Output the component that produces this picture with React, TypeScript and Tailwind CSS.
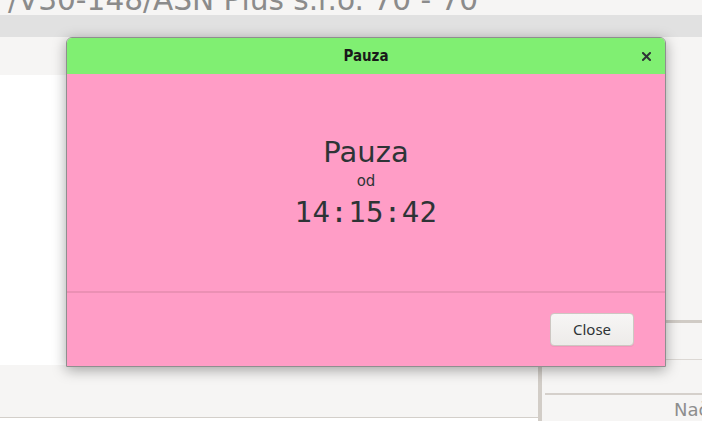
import React from "react";

export default function App() {
  const sans = { fontFamily: '"DejaVu Sans", "Liberation Sans", sans-serif' };
  return (
    <div
      className="relative w-[702px] h-[421px] overflow-hidden bg-[#f6f5f4] flex flex-col"
      style={sans}
    >
      {/* top title strip */}
      <div className="h-[15px] overflow-hidden pl-[8px] shrink-0">
        <div className="text-[29.6px] leading-[34px] -mt-[17px] text-[#8b8b8b] whitespace-nowrap">
          /V30-148/ASN Plus s.r.o. 70 - 70
        </div>
      </div>
      <div className="h-[22px] bg-[#e1e1e1] shrink-0" />

      {/* content */}
      <div className="flex flex-1 min-h-0">
        <div className="w-[538px] flex flex-col shrink-0">
          <div className="h-[38px] shrink-0" />
          <div className="h-[290px] bg-white shrink-0" />
          <div className="h-[52px] shrink-0" />
          <div className="flex-1 border-t border-[#d3cfca] bg-white" />
        </div>
        <div className="w-[4px] bg-[#d2cdc7] shrink-0" />
        <div className="flex-1 flex flex-col pl-[3px]">
          <div className="h-[283px] shrink-0" />
          <div className="h-[3px] bg-[#d0cbc5] shrink-0" />
          <div className="h-[36px] shrink-0" />
          <div className="h-px bg-[#dcd8d4] shrink-0" />
          <div className="h-[33px] shrink-0" />
          <div className="h-[2px] bg-[#d5d0cb] shrink-0" />
          <div className="pl-[129px] mt-[4px] text-[18px] leading-[22px] text-[#8e8e8e] whitespace-nowrap">
            Načíst
          </div>
        </div>
      </div>

      {/* dialog */}
      <div className="absolute left-[66px] top-[37px] w-[600px] h-[330px] border border-[#8f8f8f] rounded-t-[6px] overflow-hidden flex flex-col shadow-[0_3px_14px_rgba(0,0,0,0.35)]">
        <div className="relative h-[36px] shrink-0 bg-[#80ef72] flex items-center justify-center">
          <span
            className="text-[15px] font-bold text-[#1a1a1a] leading-none"
            style={{
              fontFamily: '"DejaVu Sans Condensed", "DejaVu Sans", sans-serif',
              fontStretch: "condensed",
            }}
          >
            Pauza
          </span>
          <svg
            className="absolute right-[14px] top-[14px]"
            width="9"
            height="9"
            viewBox="0 0 9 9"
          >
            <path
              d="M1 1 L8 8 M8 1 L1 8"
              stroke="#2e3436"
              strokeWidth="2"
              strokeLinecap="square"
            />
          </svg>
        </div>
        <div className="h-[217px] shrink-0 bg-[#ff9dc6] flex flex-col items-center pt-[61px] text-[#2e3436]">
          <div className="text-[29px] leading-[34px]">Pauza</div>
          <div className="text-[15px] leading-[20px] mt-[2px]">od</div>
          <div
            className="text-[29px] leading-[34px] mt-[4px] tracking-[0.4px]"
            style={{ fontFamily: '"DejaVu Sans Mono", "Liberation Mono", monospace' }}
          >
            14:15:42
          </div>
        </div>
        <div className="h-[2px] shrink-0 bg-[#eb90b4]" />
        <div className="flex-1 bg-[#ff9dc6] flex items-center justify-end pr-[31px]">
          <button
            className="w-[84px] h-[33px] rounded-[4px] border border-[#cdc7c2] bg-gradient-to-b from-[#f7f6f5] to-[#edebe9] text-[15px] text-[#2e3436] shadow-[0_1px_0_rgba(0,0,0,0.05)]"
            style={{ fontFamily: '"Noto Sans", "DejaVu Sans", sans-serif' }}
          >
            Close
          </button>
        </div>
      </div>
    </div>
  );
}
